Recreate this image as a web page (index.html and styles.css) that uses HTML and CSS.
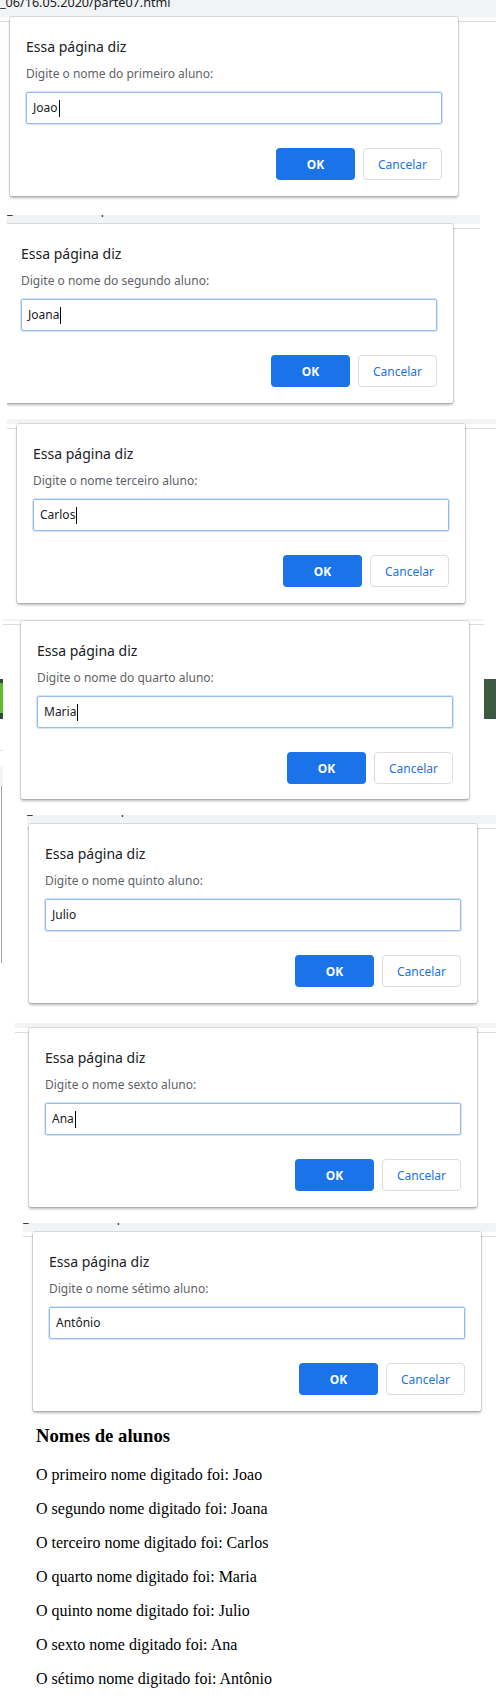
FILE: index.html
```html
<!DOCTYPE html>
<html lang="pt-BR">
<head>
<meta charset="utf-8">
<title>parte07</title>
<link rel="stylesheet" href="styles.css">
</head>
<body>
<div class="collage">
  <section class="shot shot1">
    <div class="strip"><span class="url url-top">_06/16.05.2020/parte07.html</span></div>
    <div class="page">
      <div class="dialog">
        <div class="title">Essa página diz</div>
        <div class="msg">Digite o nome do primeiro aluno:</div>
        <div class="field"><span>Joao</span><span class="caret"></span></div>
        <div class="actions"><span class="btn ok">OK</span><span class="btn cancel">Cancelar</span></div>
      </div>
    </div>
  </section>

  <section class="shot shot2">
    <div class="strip"><span class="url">_06/16.05.2020/parte07.html</span></div>
    <div class="page">
      <div class="dialog">
        <div class="title">Essa página diz</div>
        <div class="msg">Digite o nome do segundo aluno:</div>
        <div class="field"><span>Joana</span><span class="caret"></span></div>
        <div class="actions"><span class="btn ok">OK</span><span class="btn cancel">Cancelar</span></div>
      </div>
    </div>
  </section>

  <section class="shot shot3">
    <div class="strip"></div>
    <div class="page">
      <div class="dialog">
        <div class="title">Essa página diz</div>
        <div class="msg">Digite o nome terceiro aluno:</div>
        <div class="field"><span>Carlos</span><span class="caret"></span></div>
        <div class="actions"><span class="btn ok">OK</span><span class="btn cancel">Cancelar</span></div>
      </div>
    </div>
  </section>

  <section class="shot shot4">
    <div class="strip"></div>
    <div class="page">
      <div class="dialog">
        <div class="title">Essa página diz</div>
        <div class="msg">Digite o nome do quarto aluno:</div>
        <div class="field"><span>Maria</span><span class="caret"></span></div>
        <div class="actions"><span class="btn ok">OK</span><span class="btn cancel">Cancelar</span></div>
      </div>
    </div>
  </section>

  <section class="shot shot5">
    <div class="strip"><span class="url">_06/16.05.2020/parte07.html</span></div>
    <div class="page">
      <div class="dialog">
        <div class="title">Essa página diz</div>
        <div class="msg">Digite o nome quinto aluno:</div>
        <div class="field"><span>Julio</span></div>
        <div class="actions"><span class="btn ok">OK</span><span class="btn cancel">Cancelar</span></div>
      </div>
    </div>
  </section>

  <section class="shot shot6">
    <div class="strip"></div>
    <div class="page">
      <div class="dialog">
        <div class="title">Essa página diz</div>
        <div class="msg">Digite o nome sexto aluno:</div>
        <div class="field"><span>Ana</span><span class="caret"></span></div>
        <div class="actions"><span class="btn ok">OK</span><span class="btn cancel">Cancelar</span></div>
      </div>
    </div>
  </section>

  <section class="shot shot7">
    <div class="strip"><span class="url">_06/16.05.2020/parte07.html</span></div>
    <div class="page">
      <div class="dialog">
        <div class="title">Essa página diz</div>
        <div class="msg">Digite o nome sétimo aluno:</div>
        <div class="field"><span>Antônio</span></div>
        <div class="actions"><span class="btn ok">OK</span><span class="btn cancel">Cancelar</span></div>
      </div>
    </div>
  </section>
</div>

<main class="result">
  <h3>Nomes de alunos</h3>
  <p>O primeiro nome digitado foi: Joao</p>
  <p>O segundo nome digitado foi: Joana</p>
  <p>O terceiro nome digitado foi: Carlos</p>
  <p>O quarto nome digitado foi: Maria</p>
  <p>O quinto nome digitado foi: Julio</p>
  <p>O sexto nome digitado foi: Ana</p>
  <p>O sétimo nome digitado foi: Antônio</p>
</main>
</body>
</html>
```
FILE: styles.css
```css
html, body {
  margin: 0;
  padding: 0;
  background: #ffffff;
}

body {
  width: 496px;
  overflow: hidden;
}

/* collage of browser screenshots */
.collage {
  background:
    /* left gray vertical rule (page behind shots 4/5) */
    linear-gradient(#a0a0a0, #a0a0a0) no-repeat 1px 786px / 1px 177px,
    linear-gradient(#f1f3f4, #f1f3f4) no-repeat 0 766px / 3px 20px,
    linear-gradient(#e3e3e3, #e3e3e3) no-repeat 0 750px / 3px 1px,
    /* green logo bits */
    linear-gradient(#2f4d35 0 4px, #62b92f 4px 34px, #2f4d35 34px) no-repeat 0 679px / 3px 40px,
    linear-gradient(#3b5a40, #3b5a40) no-repeat 484px 679px / 12px 40px;
}

.shot {
  display: block;
}

.strip {
  background: #f1f3f4;
  overflow: hidden;
}

.url {
  display: block;
  font-family: "Noto Sans", "Open Sans", sans-serif;
  font-size: 12.6px;
  line-height: 17px;
  color: #202124;
  white-space: nowrap;
  margin-top: -14px;
}

.url-top {
  margin-top: -6.4px;
}

.page {
  background: linear-gradient(#dadce0, #dadce0) no-repeat 0 4px / 100% 1px;
}

/* positions of each slice */
.shot1 .strip { height: 17px; }
.shot1 .dialog { margin-left: 10px; }

.shot2 {
  margin-top: 19px;
  margin-left: 7px;
  width: 473px;
  overflow: hidden;
  padding-bottom: 8px;
}
.shot2 .strip { height: 9px; }
.shot2 .dialog { margin-left: -2px; }

.shot3 {
  margin-top: 8px;
  margin-left: 7px;
}
.shot3 .strip { height: 5px; }
.shot3 .dialog { margin-left: 10px; }

.shot4 {
  margin-top: 16px;
}
.shot4 .strip {
  height: 2px;
  margin-left: 3px;
  width: 481px;
}
.shot4 .page {
  margin-left: 3px;
  width: 481px;
  background-position: 0 3px;
}
.shot4 .dialog {
  margin-left: 18px;
  height: 178px;
}

.shot5 {
  margin-top: 16px;
  margin-left: 27px;
}
.shot5 .strip { height: 9px; }
.shot5 .dialog { margin-left: 2px; }

.shot6 {
  margin-top: 20px;
  margin-left: 15px;
}
.shot6 .strip { height: 5px; }
.shot6 .dialog { margin-left: 14px; }

.shot7 {
  margin-top: 16px;
  margin-left: 23px;
}
.shot7 .strip { height: 9px; }
.shot7 .dialog { margin-left: 10px; }

/* Chrome prompt dialog */
.dialog {
  box-sizing: border-box;
  width: 448px;
  height: 179px;
  padding: 20px 16px 16px;
  background: #ffffff;
  border-radius: 2px;
  box-shadow: 0 0 0 1px rgba(0, 0, 0, 0.10), 0 2px 3px rgba(0, 0, 0, 0.28);
  font-family: "Noto Sans", "Open Sans", sans-serif;
}

.title {
  font-size: 14px;
  line-height: 20px;
  color: #202124;
  margin-bottom: 8px;
}

.msg {
  font-size: 12px;
  line-height: 18px;
  color: #5f6368;
  margin-bottom: 9px;
}

.field {
  box-sizing: border-box;
  height: 32px;
  border: 1px solid #95bcf2;
  border-radius: 2px;
  box-shadow: 0 0 0 1px #d6e5fb;
  padding-left: 6px;
  font-size: 12px;
  line-height: 30px;
  color: #202124;
  display: flex;
  align-items: center;
}

.caret {
  display: inline-block;
  width: 1px;
  height: 17px;
  background: #000000;
  margin-left: 1px;
}

.actions {
  margin-top: 24px;
  display: flex;
  justify-content: flex-end;
  gap: 8px;
}

.btn {
  box-sizing: border-box;
  width: 79px;
  height: 32px;
  border-radius: 4px;
  display: flex;
  align-items: center;
  justify-content: center;
  font-size: 12px;
}

.ok {
  background: #1a73e8;
  color: #ffffff;
  font-weight: 700;
}

.cancel {
  background: #ffffff;
  border: 1px solid #dadce0;
  color: #1a73e8;
}

/* resulting page */
.result {
  padding-left: 36px;
  padding-top: 1px;
  font-family: "Liberation Serif", "Times New Roman", serif;
  color: #000000;
}

.result h3 {
  font-size: 18.72px;
  font-weight: 700;
  margin: 13px 0 18.72px;
}

.result p {
  font-size: 16px;
  line-height: 18px;
  margin: 16px 0;
}
```
